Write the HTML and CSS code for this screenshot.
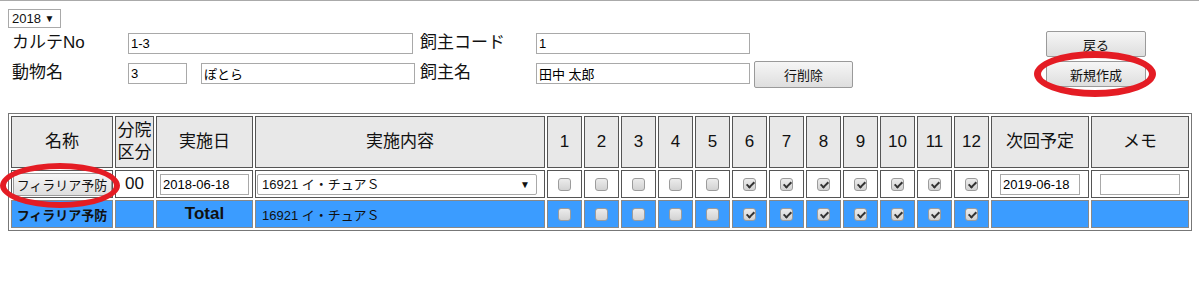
FILE: index.html
```html
<!DOCTYPE html>
<html lang="ja">
<head>
  <meta charset="UTF-8" />
  <title>フィラリア予防</title>
  <link rel="stylesheet" href="styles.css">
</head>
<body>
  <div class="topline"></div>
  <div class="page">
    <div class="year">2018 <span class="arrow">▼</span></div>

    <div class="head">
      <div class="form">
        <label>カルテNo</label>
        <div class="field"><input class="w285" value="1-3"></div>
        <label>飼主コード</label>
        <div class="field"><input class="w214" value="1"></div>
        <div></div>

        <label>動物名</label>
        <div class="field pair"><input class="w59" value="3"><input class="w214" value="ぽとら"></div>
        <label>飼主名</label>
        <div class="field"><input class="w214" value="田中 太郎"></div>
        <div><button class="btn del">行削除</button></div>
      </div>
      <div class="side">
        <button class="btn">戻る</button>
        <button class="btn">新規作成</button>
      </div>
    </div>

    <table class="grid">
      <colgroup>
        <col style="width:102px"><col style="width:39px"><col style="width:97px"><col style="width:290px">
        <col span="12" style="width:35px">
        <col style="width:98px"><col style="width:98px">
      </colgroup>
      <tr class="hd">
        <th>名称</th><th>分院<br>区分</th><th>実施日</th><th>実施内容</th>
        <th>1</th><th>2</th><th>3</th><th>4</th><th>5</th><th>6</th>
        <th>7</th><th>8</th><th>9</th><th>10</th><th>11</th><th>12</th>
        <th>次回予定</th><th>メモ</th>
      </tr>
      <tr class="row">
        <td><button class="btn name">フィラリア予防</button></td>
        <td class="code">00</td>
        <td><input class="date" value="2018-06-18"></td>
        <td class="left"><div class="pick">16921 イ・チュアＳ<span class="arrow">▼</span></div></td>
        <td><input type="checkbox" class="cb"></td>
        <td><input type="checkbox" class="cb"></td>
        <td><input type="checkbox" class="cb"></td>
        <td><input type="checkbox" class="cb"></td>
        <td><input type="checkbox" class="cb"></td>
        <td><input type="checkbox" class="cb" checked></td>
        <td><input type="checkbox" class="cb" checked></td>
        <td><input type="checkbox" class="cb" checked></td>
        <td><input type="checkbox" class="cb" checked></td>
        <td><input type="checkbox" class="cb" checked></td>
        <td><input type="checkbox" class="cb" checked></td>
        <td><input type="checkbox" class="cb" checked></td>
        <td><input class="next" value="2019-06-18"></td>
        <td><input class="memo" value=""></td>
      </tr>
      <tr class="total">
        <td class="tname">フィラリア予防</td>
        <td></td>
        <td class="ttl">Total</td>
        <td class="left titem">16921 イ・チュアＳ</td>
        <td><input type="checkbox" class="cb"></td>
        <td><input type="checkbox" class="cb"></td>
        <td><input type="checkbox" class="cb"></td>
        <td><input type="checkbox" class="cb"></td>
        <td><input type="checkbox" class="cb"></td>
        <td><input type="checkbox" class="cb" checked></td>
        <td><input type="checkbox" class="cb" checked></td>
        <td><input type="checkbox" class="cb" checked></td>
        <td><input type="checkbox" class="cb" checked></td>
        <td><input type="checkbox" class="cb" checked></td>
        <td><input type="checkbox" class="cb" checked></td>
        <td><input type="checkbox" class="cb" checked></td>
        <td></td>
        <td></td>
      </tr>
    </table>
  </div>

  <div class="ring ring-name"></div>
  <div class="ring ring-new"></div>
</body>
</html>
```

FILE: styles.css
```css
body {
  margin: 0;
  font-family: "Liberation Sans", "Noto Sans CJK JP", sans-serif;
  color: #111;
  background: #fff;
}
.topline {
  height: 1px;
  background: #aaa;
}
.page {
  padding: 8px 8px 0;
}
.year {
  display: inline-block;
  height: 17px;
  line-height: 17px;
  padding: 0 6px 0 3px;
  border: 1px solid #a9a9a9;
  font-size: 13px;
}
.arrow {
  font-size: 10px;
  vertical-align: 1px;
}
.head {
  display: flex;
  margin-top: 3px;
}
.form {
  display: grid;
  grid-template-columns: 116px 292px 116px 218px auto;
  grid-auto-rows: 30px;
  margin-left: 4px;
}
.form label {
  font-size: 17px;
  line-height: 20px;
  padding-top: 2px;
}
.field {
  padding-top: 2px;
}
.pair {
  display: flex;
  gap: 14px;
}
input {
  box-sizing: border-box;
  height: 21px;
  margin: 0;
  padding: 0 2px;
  border: 1px solid #a9a9a9;
  font-family: "Liberation Sans", "Noto Sans CJK JP", sans-serif;
  font-size: 13px;
  color: #000;
}
.w285 { width: 285px; }
.w214 { width: 214px; }
.w59 { width: 59px; }
.btn {
  box-sizing: border-box;
  margin: 0;
  padding: 0 4px;
  border: 1px solid #9a9a9a;
  border-radius: 2px;
  background: linear-gradient(#f6f6f6, #dedede);
  font-family: "Liberation Sans", "Noto Sans CJK JP", sans-serif;
  font-size: 13px;
  color: #111;
}
.del {
  width: 99px;
  height: 27px;
}
.side {
  display: flex;
  flex-direction: column;
  gap: 4px;
  margin-left: auto;
  margin-right: 45px;
}
.side .btn {
  width: 100px;
  height: 26px;
}
.grid {
  width: 100%;
  margin-top: 22px;
  table-layout: fixed;
  border: 1px solid #777;
  border-spacing: 2px;
}
.grid th, .grid td {
  box-sizing: border-box;
  padding: 0;
  border: 1px solid #555;
  text-align: center;
}
.hd { height: 52px; }
.hd th {
  background: #e8e8e8;
  font-size: 17px;
  font-weight: normal;
  line-height: 22px;
}
.row { height: 28px; }
.row td { background: #fff; }
.name {
  width: 99px;
  height: 23px;
  padding: 0;
}
.code { font-size: 17px; }
.date { width: 89px; }
.next, .memo { width: 80px; }
.left {
  text-align: left !important;
}
.pick {
  position: relative;
  box-sizing: border-box;
  width: 280px;
  height: 21px;
  margin-left: 1px;
  padding-left: 4px;
  border: 1px solid #a9a9a9;
  border-radius: 2px;
  font-size: 13px;
  line-height: 19px;
}
.pick .arrow {
  position: absolute;
  right: 6px;
  top: 0;
}
.cb {
  appearance: none;
  position: relative;
  width: 13px;
  height: 13px;
  margin: 0;
  padding: 0;
  vertical-align: middle;
  border: 1px solid #9c9c9c;
  border-radius: 3px;
  background: linear-gradient(#ececec, #d2d2d2);
}
.cb:checked::after {
  content: "";
  position: absolute;
  left: 4px;
  top: 1px;
  width: 3px;
  height: 6px;
  border: solid #333;
  border-width: 0 2px 2px 0;
  transform: rotate(45deg);
}
.total { height: 28px; }
.total td {
  background: #3b9cff;
  border-color: #888;
}
.tname {
  font-size: 13px;
  font-weight: bold;
}
.ttl {
  font-size: 17px;
  font-weight: bold;
}
.titem {
  padding-left: 6px !important;
  font-size: 13px;
}
.ring {
  position: absolute;
  box-sizing: border-box;
  border: 7px solid #e41c24;
  border-radius: 50%;
}
.ring-name {
  left: 0;
  top: 163px;
  width: 120px;
  height: 45px;
  border-width: 6px;
}
.ring-new {
  left: 1034px;
  top: 51px;
  width: 122px;
  height: 46px;
}
```
